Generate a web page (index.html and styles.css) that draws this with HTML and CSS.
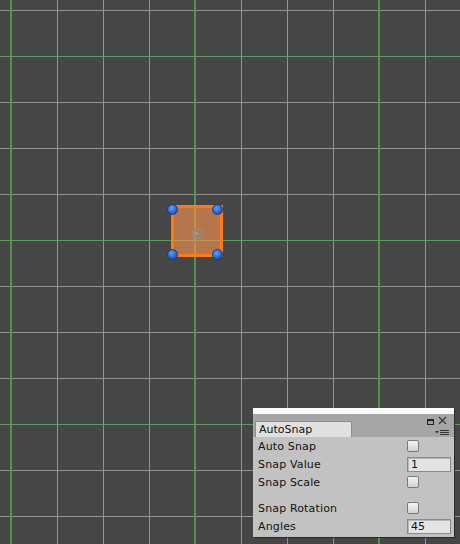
FILE: index.html
```html
<!DOCTYPE html>
<html>
<head>
<meta charset="utf-8">
<link rel="stylesheet" href="styles.css">
</head>
<body>
<div class="scene">
  <div class="major-lines"></div>
  <div class="object">
    <div class="pivot"></div>
    <span class="handle h-tl"></span>
    <span class="handle h-tr"></span>
    <span class="handle h-bl"></span>
    <span class="handle h-br"></span>
  </div>

  <div class="window">
    <div class="titlestrip"></div>
    <div class="tabbar">
      <div class="tab">AutoSnap</div>
      <svg class="icon-max" width="7" height="6" viewBox="0 0 7 6"><rect x="0.5" y="0.5" width="6" height="5" fill="none" stroke="#222" stroke-width="1"/><rect x="0.5" y="0.5" width="6" height="1.6" fill="#222"/></svg>
      <svg class="icon-close" width="9" height="9" viewBox="0 0 9 9"><path d="M1 1 L8 8 M8 1 L1 8" stroke="#333" stroke-width="1.1" fill="none"/></svg>
      <svg class="icon-menu" width="14" height="7" viewBox="0 0 14 7"><path d="M0 2 L4 2 L2 4.5 Z" fill="#333"/><path d="M5 1.5 H14 M5 3.5 H14 M5 5.5 H14" stroke="#333" stroke-width="1"/></svg>
    </div>
    <div class="content">
      <div class="row"><span class="label">Auto Snap</span><span class="check"></span></div>
      <div class="row"><span class="label">Snap Value</span><span class="field">1</span></div>
      <div class="row"><span class="label">Snap Scale</span><span class="check"></span></div>
      <div class="row spaced"><span class="label">Snap Rotation</span><span class="check"></span></div>
      <div class="row"><span class="label">Angles</span><span class="field">45</span></div>
    </div>
  </div>
</div>
</body>
</html>
```

FILE: styles.css
```css
html, body {
  margin: 0;
  padding: 0;
}
body {
  width: 460px;
  height: 544px;
  overflow: hidden;
  font-family: "DejaVu Sans", "Liberation Sans", sans-serif;
}
.scene {
  position: relative;
  width: 460px;
  height: 544px;
  background-color: #464646;
  background-image:
    linear-gradient(to right, #939393 1px, transparent 1px),
    linear-gradient(to bottom, #939393 1px, transparent 1px);
  background-size: 46px 46px, 46px 46px;
  background-position: 11px 0, 0 10px;
}
.major-lines {
  position: absolute;
  inset: 0;
  background-image:
    linear-gradient(90deg, #4f964f 0, #4f964f 2px, transparent 2px, transparent 100%),
    linear-gradient(180deg, #5a9e5a 0, #5a9e5a 1px, transparent 1px, transparent 100%);
  background-size: 184px 100%, 100% 184px;
  background-position: 10px 0, 0 56px;
  background-repeat: repeat-x, repeat-y;
}
.object {
  position: absolute;
  left: 171px;
  top: 205px;
  width: 46px;
  height: 46px;
  border: 3px solid #ff7a10;
  background: rgba(255, 150, 80, 0.6);
}
.pivot {
  position: absolute;
  left: 18px;
  top: 20px;
  width: 7px;
  height: 7px;
  border: 2px solid #8c8c8c;
  border-radius: 50%;
  box-sizing: content-box;
}
.pivot::after {
  content: "";
  position: absolute;
  left: 2px;
  top: 2px;
  width: 3px;
  height: 3px;
  border-radius: 50%;
  background: #9a9a9a;
}
.handle {
  position: absolute;
  width: 9px;
  height: 9px;
  border-radius: 50%;
  background: radial-gradient(circle at 40% 35%, #5aa0ff 0%, #1f64d8 60%, #1848a0 100%);
  border: 1px solid #1a3a78;
}
.h-tl { left: -7px; top: -4px; }
.h-tr { left: 38px; top: -4px; }
.h-bl { left: -7px; top: 41px; }
.h-br { left: 38px; top: 41px; }

.window {
  position: absolute;
  left: 253px;
  top: 408px;
  width: 201px;
  height: 129px;
  background: #c2c2c2;
  box-shadow: 1px 1px 0 #2a2a2a;
  display: flex;
  flex-direction: column;
}
.titlestrip {
  height: 6px;
  background: #fbfbfb;
}
.tabbar {
  position: relative;
  height: 23px;
  background: #a6a6a6;
  display: flex;
  align-items: flex-end;
  padding-left: 2px;
}
.tab {
  width: 92px;
  height: 15px;
  background: #e0e0e0;
  border: 1px solid #8c8c8c;
  border-bottom: none;
  border-radius: 2px 2px 0 0;
  font-size: 11px;
  line-height: 15px;
  color: #111;
  padding-left: 3px;
  box-sizing: content-box;
}
.icon-max {
  position: absolute;
  left: 174px;
  top: 5px;
}
.icon-close {
  position: absolute;
  left: 185px;
  top: 2px;
}
.icon-menu {
  position: absolute;
  left: 182px;
  top: 15px;
}
.content {
  display: flex;
  flex-direction: column;
}
.row {
  height: 18px;
  display: flex;
  align-items: center;
  padding-left: 5px;
}
.row.spaced {
  margin-top: 8px;
}
.label {
  width: 149px;
  font-size: 11px;
  letter-spacing: 0.15px;
  color: #111;
}
.check {
  width: 10px;
  height: 10px;
  border: 1px solid #7a7a7a;
  border-radius: 2px;
  background: linear-gradient(to bottom, #f4f4f4, #d2d2d2);
}
.field {
  width: 39px;
  height: 13px;
  border: 1px solid #8a8a8a;
  background: #e4e4e4;
  font-size: 11px;
  line-height: 13px;
  padding-left: 3px;
  color: #111;
  box-shadow: inset 1px 1px 0 #b8b8b8;
}
```
